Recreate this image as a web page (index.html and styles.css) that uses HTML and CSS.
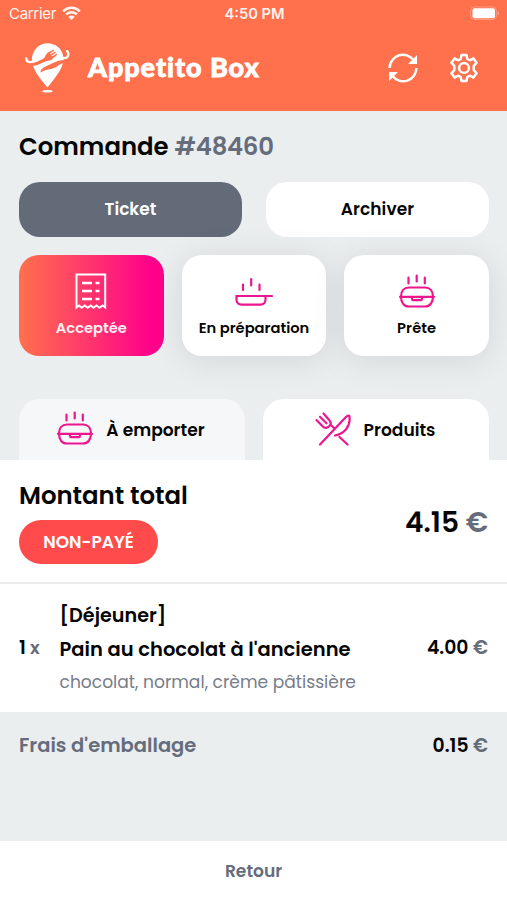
FILE: index.html
```html
<!DOCTYPE html>
<html lang="fr">
<head>
<meta charset="utf-8">
<title>Appetito Box</title>
<link rel="stylesheet" href="styles.css">
</head>
<body>
<svg width="0" height="0" class="defs">
  <symbol id="lunchbox" viewBox="0 0 36 34">
    <g fill="none" stroke="currentColor" stroke-width="2.200" stroke-linecap="round" stroke-linejoin="round">
      <path d="M9.500 3.500v6M17.700 1.500v6M25.800 3.500v6"/>
      <path d="M2 22.500c0-5.500 3-9 8-9h16c5 0 8 3.500 8 9 0 6-3 10-8 10H10c-5 0-8-4-8-10z"/>
      <path d="M1 22.800h34M12.500 23l1 3.200h9l1-3.200"/>
    </g>
  </symbol>
</svg>

<header class="header">
  <div class="status">
    <div class="carrier"><span>Carrier</span>
      <svg width="19" height="15" viewBox="0 0 19 15"><g fill="none" stroke="#fff" stroke-width="2.500"><path d="M1.200 5.300a11.700 11.700 0 0 1 16.600 0"/><path d="M4.100 8.400a7.600 7.600 0 0 1 10.800 0"/></g><path fill="#fff" d="M6.300 10.900a4.500 4.500 0 0 1 6.400 0L9.500 14z"/></svg>
    </div>
    <span class="clock">4:50 PM</span>
    <svg class="battery" width="30" height="15" viewBox="0 0 30 15"><rect x=".7" y=".9" width="25.600" height="12.600" rx="3.500" fill="none" stroke="#fff" stroke-opacity=".3"/><rect x="2.500" y="2.200" width="22.500" height="10" rx="2" fill="#fff"/><path d="M27.500 5v4.500c2-.8 2-3.700 0-4.500z" fill="#fff" fill-opacity=".35"/></svg>
  </div>
  <div class="brandbar">
    <svg class="logo" width="46" height="52" viewBox="0 0 46 52">
      <path fill="#fff" d="M7 15C9 6 15 1.200 22.500 1.200S37 6 38.300 14.500C40 24 31 35 22.500 45.500 13.500 35 5.500 25 7 15z"/>
      <path fill="#ff704c" d="M5 20.500c6 1 9-2 13.500-4 2-1 2-4.500 4.500-6l5.500-3 .7 1-4.200 3 .4.700 4.800-2.700.7 1-4.500 3.300.5.700 4.600-2.700.6 1-5 4.500c-2 1.700-4 1-6 2C15 21.500 12 24.500 6 23.500z"/>
      <path fill="#ff704c" d="M15.500 30.500c-.5-4.500 7-7 12.500-9.500 4-2 7-3.500 12-2.500l1 3c-4-1-6 1-9 3-5 3.500-10 2-16.500 6z"/>
      <path fill="none" stroke="#fff" stroke-width="2.300" stroke-linecap="round" d="M1.300 16.500c0 5.200 6.500 3.800 10.300 1.800M30 18.800c4-2.300 6-2.900 9-2.700 4.400.2 5.500-4.500 3-7.100"/>
      <ellipse cx="22.500" cy="49.300" rx="5.200" ry="1.300" fill="#fff"/>
    </svg>
    <h1 class="brand">Appetito Box</h1>
    <svg class="refresh" width="30" height="30" viewBox="0 0 30 30"><g fill="none" stroke="#fff" stroke-width="2.500"><path d="M1.600 15A13.300 13.300 0 0 1 25.500 7"/><path d="M28.400 15A13.300 13.300 0 0 1 4.500 23"/></g><path fill="#fff" d="M29 2v9h-9zM1 28v-9h9z"/></svg>
    <svg class="gear" width="30" height="30" viewBox="0 0 30 30" fill="none" stroke="#fff" stroke-width="2.500" stroke-linejoin="round"><path d="M12.500 2h5l.8 4 2.500 1.300 3.600-1.900 3.200 4.300-2.900 3.100v4.400l2.900 3.100-3.200 4.300-3.600-1.900-2.500 1.300-.8 4h-5l-.8-4-2.500-1.300-3.600 1.900-3.200-4.300 2.900-3.100v-4.400l-2.900-3.100 3.200-4.300 3.600 1.900L11.700 6z"/><circle cx="15" cy="15" r="4.900"/></svg>
  </div>
</header>

<main>
  <section class="order">
    <h2 class="order-title">Commande <span class="muted number">#48460</span></h2>
    <div class="actions">
      <button class="action dark">Ticket</button>
      <button class="action archive">Archiver</button>
    </div>
    <div class="states">
      <button class="state active">
        <svg width="32" height="38" viewBox="0 -1 32 38" fill="none" stroke="#fff" stroke-width="2"><path d="M1.500 34.500V1.500h28.700v33l-2.500-2-3.200 2.300-3-2.300-3 2.300-2.800-2.300-3 2.300-3-2.300-3 2.300-2.700-2.300z"/><path stroke-width="2.400" d="M7 10h10M20.500 10h4M7 18h10M20.500 18h4M7 26h10M20.500 26h4"/></svg>
        <span>Acceptée</span>
      </button>
      <button class="state">
        <svg width="38" height="38" viewBox="0 0 38 38" fill="none" stroke="currentColor" stroke-width="2.200" stroke-linecap="round"><path d="M8 12.500v5.500M16.200 7v6.500M24.500 12.500v5.500M37 24H1.500v3.500c0 3 2 5.200 5 5.200h19c3 0 5-2.200 5-5.200V24"/></svg>
        <span>En préparation</span>
      </button>
      <button class="state">
        <svg width="36" height="34"><use href="#lunchbox"/></svg>
        <span class="ready">Prête</span>
      </button>
    </div>
    <nav class="tabs">
      <a class="tab takeaway"><svg width="36" height="34"><use href="#lunchbox"/></svg><span>À emporter</span></a>
      <a class="tab selected"><svg width="36" height="34" viewBox="0 0 36 34" fill="none" stroke="currentColor" stroke-width="2.200" stroke-linecap="round" stroke-linejoin="round"><path d="M5 32.500 30 6c2-2.200 4-3 4.300-2.200.8 4.200-.2 9.500-3 13.200-2.800 3.500-6.300 5.700-11.300 6.500M19 16l-3.200-3M24.500 25l8 7.500"/><path d="m1.500 8 6.300 6.500c2.200 2.200 4.700 1.500 6.400-.2 1.800-1.800 2-4.300 0-6.300L8.500 1.500M5 4.800l6.500 6.500"/></svg><span>Produits</span></a>
    </nav>
  </section>

  <section class="total">
    <div>
      <h2 class="total-title">Montant total</h2>
      <span class="badge">NON-PAYÉ</span>
    </div>
    <p class="amount">4.15 <span class="muted">€</span></p>
  </section>

  <section class="item">
    <p class="qty">1<span class="muted">x</span></p>
    <div class="details">
      <p class="category">[Déjeuner]</p>
      <p class="name">Pain au chocolat à l'ancienne</p>
      <p class="options">chocolat, normal, crème pâtissière</p>
    </div>
    <p class="price">4.00 <span class="muted">€</span></p>
  </section>

  <section class="fees">
    <p class="fee-name">Frais d'emballage</p>
    <p class="price fee-price">0.15 <span class="muted">€</span></p>
  </section>
</main>

<footer class="footer">Retour</footer>
</body>
</html>
```

FILE: styles.css
```css
* { box-sizing: border-box; margin: 0; padding: 0; }
body { width: 507px; height: 900px; overflow: hidden; background: #fff; color: #050505; font-family: Poppins, Inter, sans-serif; font-weight: 600; }
svg { flex: none; }
.defs { display: block; height: 0; }
button { border: 0; font: inherit; color: inherit; }
h1, h2 { font-weight: inherit; }
.muted { color: #656c7b; }

.header { height: 111px; background: #ff704c; color: #fff; }
.status { display: grid; grid-template-columns: 1fr auto 1fr; align-items: center; height: 28px; padding: 0 7px 0 9px; font-family: Inter, sans-serif; font-size: 15px; line-height: 28px; }
.carrier { display: flex; align-items: center; gap: 6px; font-weight: 400; letter-spacing: -.3px; opacity: .93; }
.carrier svg { margin-top: -2px; }
.clock { font-weight: 600; font-size: 14.7px; opacity: .92; }
.battery { justify-self: end; margin-top: -1px; }
.brandbar { display: flex; align-items: center; height: 80px; padding: 0 28px 0 25px; }
.brand { flex: 1; margin: -3px 0 0 17px; font: 900 27px/32px Lato, sans-serif; letter-spacing: .95px; -webkit-text-stroke: .8px #fff; }
.refresh { margin-right: 31px; }

.order { height: 349px; padding: 20px 18px 0 19px; background: #ebeeef; }
.order-title { height: 51px; font-size: 24.4px; line-height: 32px; white-space: nowrap; }
.number { letter-spacing: -.3px; }
.actions { display: grid; grid-template-columns: 1fr 1fr; gap: 24px; }
.action { height: 55px; padding-bottom: 1px; border-radius: 21px; background: #fff; font-size: 17px; }
.dark { background: #636b79; color: #fff; }
.archive { letter-spacing: .1px; }
.states { display: grid; grid-template-columns: repeat(3, 1fr); gap: 18px; margin-top: 18px; }
.state { display: flex; flex-direction: column; align-items: center; height: 101px; padding-top: 17px; border-radius: 20px; background: #fff; box-shadow: 0 4px 34px rgba(0, 0, 0, .1); font-size: 14.7px; line-height: 20px; }
.state svg { height: 38px; color: #ed1690; }
.state span { margin-top: 8px; color: #050505; white-space: nowrap; }
.state .ready { letter-spacing: .1px; }
.state.active { background: linear-gradient(90deg, #ff704c, #ff008b 92%); box-shadow: none; }
.state.active span { color: #fff; opacity: .92; }
.tabs { display: grid; grid-template-columns: 1fr 1fr; gap: 18px; margin-top: 43px; }
.tab { display: flex; align-items: flex-start; justify-content: center; gap: 13px; height: 62px; padding-top: 12px; border-radius: 21px 21px 0 0; background: #fff; font-size: 17.1px; line-height: 34px; color: #ed1690; }
.tab span { color: #050505; margin-top: 2px; }
.takeaway { background: #f6f7f9; padding-right: 2px; }
.selected { padding: 13px 2px 0 0; }
.selected span { margin-top: 1px; }

.total { position: relative; display: flex; justify-content: space-between; height: 124px; padding: 20px 19px 0; background: #fff; border-bottom: 2px solid #ebebed; }
.total-title { font-size: 24.4px; line-height: 32px; }
.badge { display: flex; align-items: center; justify-content: center; width: 139px; height: 44px; margin-top: 8px; border-radius: 22px; background: #ff4b4b; color: #fff; font-size: 17px; }
.amount { margin-top: 26px; font-size: 28px; line-height: 34px; }
.item { display: grid; grid-template-columns: 40.5px 1fr auto; height: 128px; padding: 15px 19px 0; }
.qty { margin-top: 34px; font-size: 19px; line-height: 30px; }
.qty span { margin-left: 4px; font-size: 18px; }
.category, .name { font-size: 19.5px; line-height: 34px; white-space: nowrap; }
.category { font-size: 19.2px; }
.options { font-size: 17.1px; font-weight: 400; line-height: 30px; color: #777d89; white-space: nowrap; }
.price { margin-top: 34px; font-size: 18.8px; line-height: 30px; }
.fees { display: flex; justify-content: space-between; height: 129px; padding: 18px 19px; background: #ebeeef; font-size: 19.5px; line-height: 32px; }
.fee-name { color: #656c7b; }
.fee-price { margin: 0; line-height: 32px; }
.footer { height: 59px; line-height: 60px; text-align: center; font-size: 17.1px; color: #656c7b; }
```
